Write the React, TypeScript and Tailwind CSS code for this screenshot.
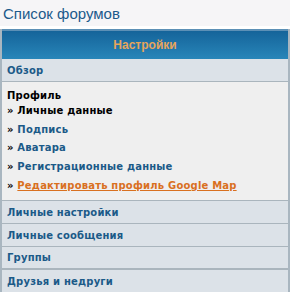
const rows = ["Личные настройки", "Личные сообщения", "Группы", "Друзья и недруги"];

const links = [
  { t: "Подпись", h: "h-[18px]" },
  { t: "Аватара", h: "h-[19px]" },
  { t: "Регистрационные данные", h: "h-[19px]" },
];

export default function App() {
  return (
    <div className="w-[290px] h-[292px] overflow-hidden bg-[#f6f5f7] font-['DejaVu_Sans',sans-serif]">
      <div className="h-[29px] pl-[3px] pt-[4px] text-[15px] leading-[20px] text-[#1b5a8b] font-['Liberation_Sans',sans-serif] border-b-[3px] border-white">
        Список форумов
      </div>
      <div className="border-x-2 border-[#a9b6c0]">
        <div className="h-[30px] flex items-center justify-center border-t-2 border-[#5c90b6] bg-gradient-to-b from-[#15649a] to-[#2886b9] text-[12px] font-bold text-[#e6a55c] font-['Liberation_Sans',sans-serif]">
          Настройки
        </div>
        <div className="h-[23px] flex items-center pl-[5px] bg-[#dce2e8] border-b border-[#aab5bd] text-[10px] font-bold text-[#1b5a88] tracking-[0.2px]">
          Обзор
        </div>
        <div className="h-[119px] bg-[#efefef] pl-[5px] pt-[6px] text-[10px] font-bold tracking-[0.2px] border-b border-[#aab5bd]">
          <div className="h-[15px] leading-[15px] text-black">Профиль</div>
          <div className="h-[18px] leading-[15px] text-black">» Личные данные</div>
          {links.map((l) => (
            <div key={l.t} className={`${l.h} leading-[18px] text-black`}>
              » <span className="text-[#1b5a88]">{l.t}</span>
            </div>
          ))}
          <div className="h-[18px] leading-[18px] text-black">
            » <span className="text-[#d9701f] underline">Редактировать профиль Google Map</span>
          </div>
        </div>
        {rows.map((r, i) => (
          <div
            key={r}
            className={`h-[23px] flex items-center pl-[5px] bg-[#dce2e8] text-[10px] font-bold text-[#1b5a88] tracking-[0.2px] ${i === 2 ? "border-b-2 border-[#aab5bd]" : "border-b border-[#aab5bd]"}`}
          >
            {r}
          </div>
        ))}
      </div>
    </div>
  );
}
